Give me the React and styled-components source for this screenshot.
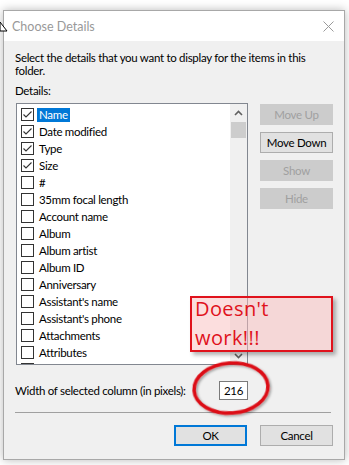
import React from "react";
import styled, { createGlobalStyle } from "styled-components";

const GlobalStyle = createGlobalStyle`
  html, body {
    margin: 0;
    background: #ffffff;
  }
  body {
    font-family: Lato, "Open Sans", sans-serif;
    font-size: 11.5px;
    letter-spacing: -0.3px;
    color: #000;
  }
`;

const items = [
  { label: "Name", checked: true, selected: true },
  { label: "Date modified", checked: true },
  { label: "Type", checked: true },
  { label: "Size", checked: true },
  { label: "#" },
  { label: "35mm focal length" },
  { label: "Account name" },
  { label: "Album" },
  { label: "Album artist" },
  { label: "Album ID" },
  { label: "Anniversary" },
  { label: "Assistant's name" },
  { label: "Assistant's phone" },
  { label: "Attachments" },
  { label: "Attributes" },
  { label: "Audio format" },
];

// Styled Components
const Page = styled.div`
  position: relative;
  width: 349px;
  height: 465px;
  padding: 10px 0 0 3px;
  box-sizing: border-box;
  overflow: hidden;
`;

const Window = styled.div`
  width: 342px;
  box-sizing: border-box;
  border: 1px solid #a8a8a8;
  box-shadow: 0 0 9px rgba(0, 0, 0, 0.28);
  background: #f0f0f0;
  display: flex;
  flex-direction: column;
`;

const TitleBar = styled.div`
  height: 30px;
  background: #ffffff;
  display: flex;
  align-items: center;
  justify-content: space-between;
  padding: 0 10px 0 8px;
`;

const Title = styled.span`
  color: #999999;
  font-size: 12.5px;
  letter-spacing: 0;
`;

const Body = styled.div`
  padding: 10px 11px 13px 12px;
  display: flex;
  flex-direction: column;
`;

const Intro = styled.p`
  margin: 0 0 0 -1px;
  line-height: 13px;
  width: 310px;
`;

const Label = styled.div`
  margin: 7px 0 0 -1px;
  line-height: 13px;
`;

const Main = styled.div`
  margin-top: 6px;
  display: flex;
  gap: 12px;
`;

const ListBox = styled.div`
  width: 232px;
  height: 262px;
  box-sizing: border-box;
  border: 1px solid #828790;
  background: #ffffff;
  display: flex;
  overflow: hidden;
`;

const Rows = styled.div`
  flex: 1;
  padding-top: 2px;
  overflow: hidden;
`;

const Row = styled.div`
  height: 17px;
  display: flex;
  align-items: center;
  padding-left: 4px;
  gap: 3px;
`;

const Box = styled.span`
  width: 13px;
  height: 13px;
  box-sizing: border-box;
  border: 1px solid #333333;
  display: flex;
  align-items: center;
  justify-content: center;
  flex-shrink: 0;
`;

const RowText = styled.span`
  padding: 0 2px;
  line-height: 14px;
  background: ${(p) => (p.$selected ? "#0078d7" : "transparent")};
  color: ${(p) => (p.$selected ? "#ffffff" : "#000000")};
`;

const ScrollBar = styled.div`
  width: 17px;
  background: #f0f0f0;
  display: flex;
  flex-direction: column;
`;

const ScrollArrow = styled.div`
  height: 17px;
  display: flex;
  align-items: center;
  justify-content: center;
`;

const Thumb = styled.div`
  height: 16px;
  margin: 1px 1px 0 1px;
  background: #cdcdcd;
`;

const Track = styled.div`
  flex: 1;
`;

const SideButtons = styled.div`
  display: flex;
  flex-direction: column;
  gap: 7px;
  padding-top: 1px;
`;

const Button = styled.button`
  width: 73px;
  height: 21px;
  box-sizing: border-box;
  padding: 0;
  font-family: inherit;
  font-size: 11.5px;
  letter-spacing: -0.3px;
  border: ${(p) =>
    p.$default ? "2px solid #0078d7" : p.disabled ? "1px solid #cccccc" : "1px solid #adadad"};
  background: ${(p) => (p.disabled ? "#cccccc" : "#e1e1e1")};
  color: ${(p) => (p.disabled ? "#a0a0a0" : "#000000")};
  display: flex;
  align-items: center;
  justify-content: center;
`;

const WidthRow = styled.div`
  width: 232px;
  margin-top: 16px;
  display: flex;
  align-items: center;
  justify-content: space-between;
`;

const WidthLabel = styled.span`
  margin-left: -1px;
`;

const WidthInput = styled.div`
  width: 29px;
  height: 19px;
  box-sizing: border-box;
  border: 1px solid #7a7a7a;
  background: #ffffff;
  display: flex;
  align-items: center;
  justify-content: center;
`;

const Separator = styled.div`
  margin: 12px 2px 12px -1px;
  height: 1px;
  background: #a0a0a0;
`;

const Footer = styled.div`
  display: flex;
  justify-content: flex-end;
  gap: 13px;
`;

const Note = styled.div`
  position: absolute;
  left: 190px;
  top: 296px;
  width: 143px;
  height: 56px;
  box-sizing: border-box;
  border: 2px solid #e0121c;
  background: rgba(250, 190, 190, 0.5);
  box-shadow: 3px 3px 4px rgba(0, 0, 0, 0.3);
  padding: 0 0 0 3px;
  color: #e0121c;
  font-family: "Open Sans", sans-serif;
  font-size: 20px;
  line-height: 29px;
`;

const NoteText = styled.div`
  margin-top: -4px;
  letter-spacing: 0.4px;
`;

const Ring = styled.svg`
  position: absolute;
  left: 186px;
  top: 355px;
  overflow: visible;
`;

const Cursor = styled.svg`
  position: absolute;
  left: 0;
  top: 21px;
`;

const Check = () => (
  <svg width="11" height="11" viewBox="0 0 11 11">
    <path d="M1.5 5.5 L4 8 L9.5 2.5" fill="none" stroke="#333" strokeWidth="1.1" />
  </svg>
);

const Chevron = ({ down }) => (
  <svg width="9" height="6" viewBox="0 0 9 6">
    <path
      d={down ? "M1 1 L4.5 4.5 L8 1" : "M1 5 L4.5 1.5 L8 5"}
      fill="none"
      stroke="#606060"
      strokeWidth="1.6"
    />
  </svg>
);

const App = () => {
  return (
    <Page>
      <GlobalStyle />
      <Window>
        <TitleBar>
          <Title>Choose Details</Title>
          <svg width="11" height="11" viewBox="0 0 11 11">
            <path d="M0.5 0.5 L10.5 10.5 M10.5 0.5 L0.5 10.5" stroke="#9a9a9a" strokeWidth="1" />
          </svg>
        </TitleBar>
        <Body>
          <Intro>
            Select the details that you want to display for the items in this
            folder.
          </Intro>
          <Label>Details:</Label>
          <Main>
            <ListBox>
              <Rows>
                {items.map((item) => (
                  <Row key={item.label}>
                    <Box>{item.checked && <Check />}</Box>
                    <RowText $selected={item.selected}>{item.label}</RowText>
                  </Row>
                ))}
              </Rows>
              <ScrollBar>
                <ScrollArrow>
                  <Chevron />
                </ScrollArrow>
                <Thumb />
                <Track />
                <ScrollArrow>
                  <Chevron down />
                </ScrollArrow>
              </ScrollBar>
            </ListBox>
            <SideButtons>
              <Button disabled>Move Up</Button>
              <Button>Move Down</Button>
              <Button disabled>Show</Button>
              <Button disabled>Hide</Button>
            </SideButtons>
          </Main>
          <WidthRow>
            <WidthLabel>Width of selected column (in pixels):</WidthLabel>
            <WidthInput>216</WidthInput>
          </WidthRow>
          <Separator />
          <Footer>
            <Button $default>OK</Button>
            <Button>Cancel</Button>
          </Footer>
        </Body>
      </Window>

      <Note>
        <NoteText>
          Doesn't
          <br />
          work!!!
        </NoteText>
      </Note>

      <Ring width="90" height="64" viewBox="0 0 90 64">
        <defs>
          <filter id="ringShadow" x="-20%" y="-20%" width="140%" height="140%">
            <feDropShadow dx="1.5" dy="1.5" stdDeviation="1.2" floodColor="#000" floodOpacity="0.35" />
          </filter>
        </defs>
        <ellipse
          cx="45"
          cy="33"
          rx="37"
          ry="25"
          transform="rotate(-4 45 33)"
          fill="none"
          stroke="#dc1018"
          strokeWidth="3.5"
          filter="url(#ringShadow)"
        />
      </Ring>

      <Cursor width="8" height="12" viewBox="0 0 8 12">
        <path d="M0 1 L7 10 L0 10 Z" fill="#ffffff" stroke="#000" strokeWidth="1" />
      </Cursor>
    </Page>
  );
};

export default App;
